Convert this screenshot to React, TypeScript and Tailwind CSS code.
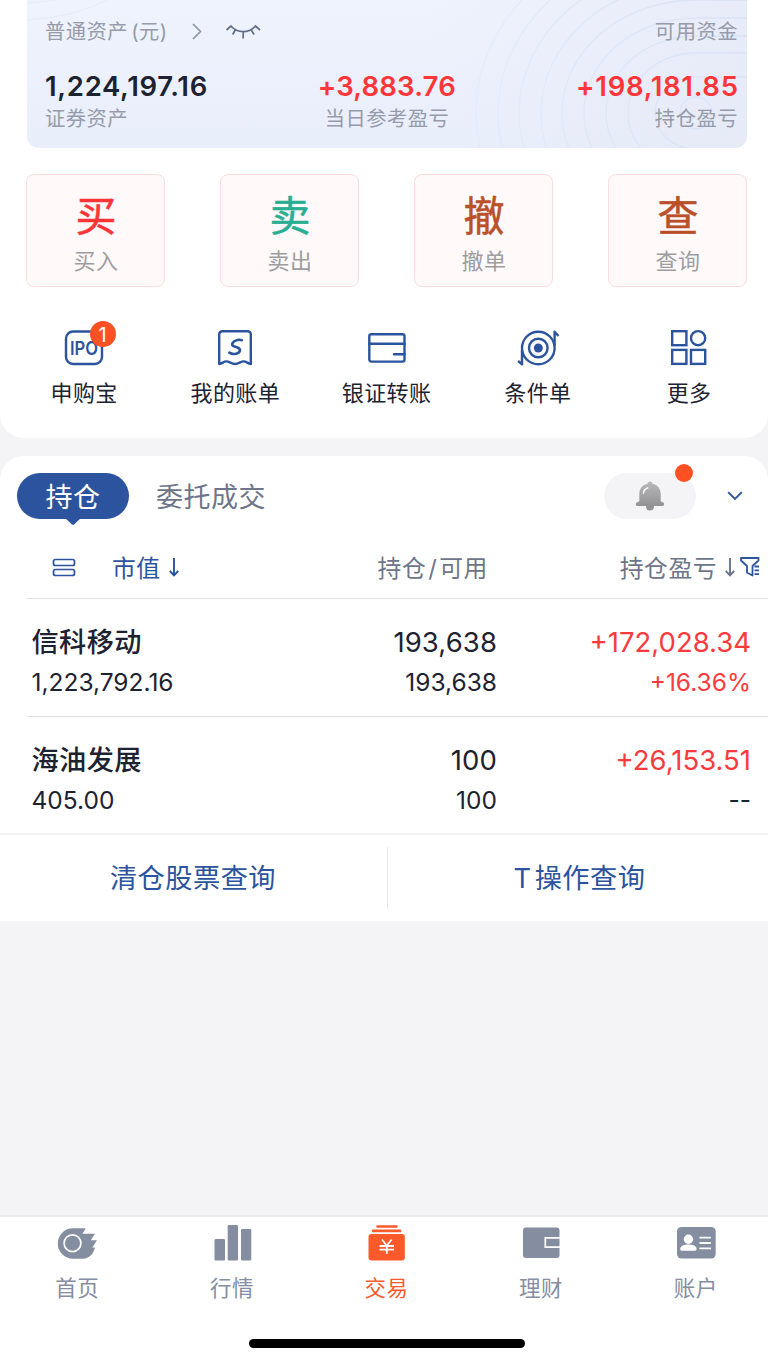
import type { ReactNode } from 'react';

type Holding = {
  name: string;
  marketValue: string;
  position: string;
  available: string;
  profit: string;
  profitRate: string;
};

const actions = [
  { glyph: '买', label: '买入', color: 'text-[#fb3537]' },
  { glyph: '卖', label: '卖出', color: 'text-[#29ae91]' },
  { glyph: '撤', label: '撤单', color: 'text-[#b9502a]' },
  { glyph: '查', label: '查询', color: 'text-[#b9502a]' },
];

const holdings: Holding[] = [
  {
    name: '信科移动',
    marketValue: '1,223,792.16',
    position: '193,638',
    available: '193,638',
    profit: '+172,028.34',
    profitRate: '+16.36%',
  },
  {
    name: '海油发展',
    marketValue: '405.00',
    position: '100',
    available: '100',
    profit: '+26,153.51',
    profitRate: '--',
  },
];

const IpoIcon = () => (
  <svg width="44" height="44" viewBox="0 0 44 44" fill="none">
    <rect x="4" y="5.5" width="36" height="32.5" rx="7" stroke="#2c539d" strokeWidth="2.4" />
    <text
      x="22"
      y="28.6"
      textAnchor="middle"
      textLength="28"
      lengthAdjust="spacingAndGlyphs"
      fill="#2c539d"
      className="font-[Inter,sans-serif] text-[19px] font-semibold"
    >
      IPO
    </text>
  </svg>
);

const BillIcon = () => (
  <svg width="44" height="44" viewBox="0 0 44 44" fill="none" stroke="#2c539d">
    <path
      d="M6.2 38V8.2a3 3 0 0 1 3-3h25.6a3 3 0 0 1 3 3V38c-3-.2-4.3-2.6-7-2.6-3.4 0-5 2.6-8.8 2.6s-5.4-2.6-8.8-2.6c-2.7 0-4 2.4-7 2.6Z"
      strokeWidth="2.4"
      strokeLinejoin="round"
    />
    <path
      d="M28.800 14.200C25 13 19.200 15 19.200 18.500c0 3 7.800 2.200 7.800 5.500 0 4-7 5-10.600 2.600"
      strokeWidth="2.6"
      strokeLinecap="round"
    />
  </svg>
);

const TransferIcon = () => (
  <svg width="44" height="44" viewBox="0 0 44 44" fill="none" stroke="#2c539d" strokeWidth="2.4">
    <rect x="4.3" y="8.2" width="35.2" height="27.4" rx="2" />
    <path d="M4.3 17.8h35.2M29 28.3h10.5" strokeLinecap="round" />
  </svg>
);

const ConditionIcon = () => (
  <svg width="44" height="44" viewBox="0 0 44 44" fill="none" stroke="#2c539d" strokeWidth="2.4">
    <circle cx="22.3" cy="22" r="16.3" />
    <circle cx="22.3" cy="22" r="9.3" />
    <circle cx="22.3" cy="22" r="4.5" fill="#2c539d" stroke="none" />
    <path d="M38.6 20V5.8l3.900 4.200M6 24v14.200L2.100 35" strokeLinejoin="round" />
  </svg>
);

const MoreIcon = () => (
  <svg width="44" height="44" viewBox="0 0 44 44" fill="none" stroke="#2c539d" strokeWidth="2.4">
    <rect x="5.2" y="5.2" width="14.2" height="14" />
    <circle cx="31.1" cy="12.2" r="7.1" />
    <rect x="5.2" y="23.9" width="14.2" height="14" />
    <rect x="24" y="23.9" width="14.2" height="14" />
  </svg>
);

const shortcuts: { label: string; icon: ReactNode; badge?: string }[] = [
  { label: '申购宝', icon: <IpoIcon />, badge: '1' },
  { label: '我的账单', icon: <BillIcon /> },
  { label: '银证转账', icon: <TransferIcon /> },
  { label: '条件单', icon: <ConditionIcon /> },
  { label: '更多', icon: <MoreIcon /> },
];

const HomeIcon = () => (
  <svg width="40" height="36" viewBox="0 0 40 36">
    <path
      d="M16 3.300h12.700L25.500 8.800H38l-4.200 6.400H40l-4.700 7.300H38C36.500 29 32 33.700 26 33.700H16A15.200 15.200 0 0 1 16 3.300Z"
      fill="#858da1"
    />
    <circle cx="15.5" cy="18.200" r="8.4" fill="none" stroke="#fff" strokeWidth="1.7" />
  </svg>
);

const MarketIcon = () => (
  <svg width="40" height="36" viewBox="0 0 40 36" fill="#858da1">
    <rect x="2.5" y="14" width="10.5" height="21.5" rx="1.3" />
    <rect x="15.7" y="0" width="10.3" height="35.5" rx="1.3" />
    <rect x="29" y="4" width="10.3" height="31.5" rx="1.3" />
  </svg>
);

const TradeIcon = () => (
  <svg width="40" height="36" viewBox="0 0 40 36">
    <path d="M11.500 1.500h19M7 5.900h27" stroke="#fc5a2b" strokeWidth="2.6" strokeLinecap="round" />
    <rect x="2.5" y="9" width="36.3" height="26.5" rx="3" fill="#fc5a2b" />
    <path
      d="M16 14.500l4.800 6.200 4.800-6.200M20.800 20.500v8.300M13.500 21h14.500M13.500 24.700h14.500"
      fill="none"
      stroke="#fff"
      strokeWidth="1.8"
    />
  </svg>
);

const WealthIcon = () => (
  <svg width="40" height="36" viewBox="0 0 40 36">
    <rect x="2" y="2.500" width="36.5" height="30.5" rx="3" fill="#858da1" />
    <path d="M39 12.800H24.300v9.400H39" fill="none" stroke="#fff" strokeWidth="1.7" />
  </svg>
);

const AccountIcon = () => (
  <svg width="40" height="36" viewBox="0 0 40 36">
    <rect x="1" y="2" width="38.7" height="31.5" rx="4.5" fill="#858da1" />
    <g fill="#fff">
      <circle cx="12.4" cy="14.2" r="4.7" />
      <path d="M4.200 24.300c0-3.600 4-4.800 8.200-4.800s8.200 1.200 8.200 4.800c0 .9-.6 1.400-1.500 1.400H5.700c-.9 0-1.500-.5-1.500-1.400Z" />
    </g>
    <path d="M24.200 12.600h10M24.200 18h10M24.200 23.400h10" stroke="#fff" strokeWidth="1.8" strokeLinecap="round" />
  </svg>
);

const tabs = [
  { label: '首页', icon: <HomeIcon /> },
  { label: '行情', icon: <MarketIcon /> },
  { label: '交易', icon: <TradeIcon />, active: true },
  { label: '理财', icon: <WealthIcon /> },
  { label: '账户', icon: <AccountIcon /> },
];

const ripples = [
  { rx: 41, ry: 36 },
  { rx: 68, ry: 60 },
  { rx: 90, ry: 77 },
  { rx: 112, ry: 95 },
  { rx: 134, ry: 113 },
  { rx: 155, ry: 131 },
  { rx: 177, ry: 149 },
  { rx: 198, ry: 167 },
  { rx: 220, ry: 185 },
];

const CardRipples = () => (
  <svg className="absolute inset-0" width="720" height="148" viewBox="0 0 720 148" fill="none">
    <defs>
      <linearGradient id="ripple" x1="440" y1="0" x2="720" y2="0" gradientUnits="userSpaceOnUse">
        <stop stopColor="#dbe5f8" stopOpacity=".4" />
        <stop offset="1" stopColor="#d8e2f6" />
      </linearGradient>
    </defs>
    {ripples.map(({ rx, ry }) => (
      <path
        key={rx}
        d={`M720 ${113 - ry}H669A${rx} ${ry} 0 0 0 669 ${113 + ry}H720`}
        stroke="url(#ripple)"
        strokeWidth="1.4"
      />
    ))}
    <circle cx="669" cy="113" r="16" stroke="#dce5f6" strokeWidth="1.4" />
    <path d="M0 3Q16 2 30 0M0 20Q48 17 80 0" stroke="#e6ebf5" />
  </svg>
);

const AssetCard = () => (
  <section className="relative mr-[21px] ml-[27px] h-[148px] overflow-hidden rounded-b-xl bg-linear-to-b from-[#eff3fd] to-[#e9eefb]">
    <div className="absolute inset-0 bg-linear-to-r from-[#e6eaf7]/0 from-55% to-[#e6eaf7]/80" />
    <CardRipples />
    <div className="relative pt-[17px] pr-[9px] pl-[18px]">
      <div className="flex h-[30px] items-center justify-between text-[20.3px] tracking-[0.5px] text-[#959baa]">
        <div className="flex items-center">
          <span className="w-[146px]">
            普通资产<span className="ml-[3px]">(元)</span>
          </span>
          <svg width="12" height="18" viewBox="0 0 12 18" fill="none">
            <path d="M2 1l7.500 7.500L2 16" stroke="#8d94a5" strokeWidth="1.7" />
          </svg>
          <svg className="ml-[22px]" width="36" height="18" viewBox="0 0 36 18" fill="none">
            <path
              d="M1.500 7L6 3c6.500 7.500 18 7.500 24.500 0L35 7M10.500 6.500l-2.800 5M18.200 8.500v7M26 6.500l3 5"
              stroke="#626d86"
              strokeWidth="1.7"
            />
          </svg>
        </div>
        <span>可用资金</span>
      </div>
      <div className="mt-[22px] flex h-9 items-center text-[27.5px] font-semibold text-[#ff3538]">
        <span className="flex-1 tracking-[0.7px] text-[#1d2231]">1,224,197.16</span>
        <span className="flex-1 pr-[10px] text-center tracking-[0.2px]">+3,883.76</span>
        <span className="-mr-[0.7px] flex-1 text-right tracking-[0.7px]">+198,181.85</span>
      </div>
      <div className="-mt-px flex h-[30px] items-center text-[20.3px] tracking-[0.5px] text-[#959baa]">
        <span className="flex-1">证券资产</span>
        <span className="flex-1 pr-[9px] text-center">当日参考盈亏</span>
        <span className="flex-1 text-right">持仓盈亏</span>
      </div>
    </div>
  </section>
);

const TradePanel = () => (
  <div className="h-[438px] rounded-b-3xl bg-white">
    <AssetCard />
    <div className="mt-[26px] mr-[20.6px] ml-[26.4px] flex justify-between">
      {actions.map(({ glyph, label, color }) => (
        <div
          key={label}
          className="flex h-[113px] w-[139px] flex-col items-center rounded-lg border border-[#fbdcdf] bg-[#fff9f9] pt-[13px]"
        >
          <span className={`text-[41px] leading-[57px] [-webkit-text-stroke:0.5px_currentColor] ${color}`}>{glyph}</span>
          <span className="text-[22px] leading-8 tracking-[0.4px] text-[#9d9d9f]">{label}</span>
        </div>
      ))}
    </div>
    <div className="mt-[39px] ml-[8.5px] flex">
      {shortcuts.map(({ label, icon, badge }) => (
        <div key={label} className="flex w-[151.25px] shrink-0 flex-col items-center">
          <div className="relative">
            {icon}
            {badge && (
              <span className="absolute -top-[5px] left-[27.5px] flex size-[26px] items-center justify-center rounded-full bg-[#fd5124] pt-px text-[20px] leading-none text-white">
                {badge}
              </span>
            )}
          </div>
          <span className="mt-[7px] text-[22px] leading-8 tracking-[0.4px] text-[#1d2231]">{label}</span>
        </div>
      ))}
    </div>
  </div>
);

const BellIcon = () => (
  <svg width="30" height="32" viewBox="0 0 30 32">
    <defs>
      <linearGradient id="bell" x1="0" y1="0" x2="0" y2="1">
        <stop stopColor="#b9b9bb" />
        <stop offset="1" stopColor="#929294" />
      </linearGradient>
    </defs>
    <circle cx="15" cy="26.5" r="4" fill="#929294" />
    <path
      d="M15 1.500c1.400 0 2.300.9 2.400 2.200 5.100 1 8.300 5 8.300 10.300v7.300l2.500 1.200c1.600.8 1.200 3.500-.7 3.500h-25c-1.900 0-2.300-2.700-.7-3.500l2.500-1.200V14c0-5.300 3.200-9.300 8.300-10.300.1-1.300 1-2.200 2.400-2.200Z"
      fill="url(#bell)"
    />
    <path d="M8.500 13c.3-2.500 1.800-4.300 4.300-5" fill="none" stroke="#fff" strokeWidth="1.5" strokeLinecap="round" />
  </svg>
);

const ArrowDown = ({ className }: { className?: string }) => (
  <svg className={className} width="12" height="20" viewBox="0 0 12 20" fill="none" stroke="currentColor">
    <path d="M6 1v17M1.800 14L6 18.300 10.200 14" strokeWidth="1.9" />
  </svg>
);

const FilterIcon = () => (
  <svg width="20" height="20" viewBox="0 0 20 20" fill="none" stroke="#2c539d" strokeWidth="1.8">
    <path d="M1 1h17.500v2.500L12.500 9v9.500L7 15.500V9L1 3.500Z" strokeLinejoin="round" />
    <path d="M14.500 9.500H19M14.500 13.300H19M14.500 17.200H19" />
  </svg>
);

const HoldingRow = ({ holding }: { holding: Holding }) => (
  <div className="grid h-[118px] grid-cols-[230px_1fr_254px] border-t border-[#e2e2e4] pt-[23px] pr-[17px] pl-[4.5px] text-[#1d2231]">
    <div>
      <p className="h-10 pt-px text-[27.2px] leading-10 font-medium tracking-[0.4px]">{holding.name}</p>
      <p className="text-[24.5px] leading-10">{holding.marketValue}</p>
    </div>
    <div className="text-right">
      <p className="text-[27.5px] leading-10 tracking-[0.1px]">{holding.position}</p>
      <p className="text-[24.5px] leading-10">{holding.available}</p>
    </div>
    <div className="text-right text-[#fb3a3d]">
      <p className="text-[27.5px] leading-10">{holding.profit}</p>
      <p className={`text-[24.5px] leading-10 ${holding.profitRate === '--' ? 'text-[#1d2231]' : ''}`}>
        {holding.profitRate}
      </p>
    </div>
  </div>
);

const HoldingsPanel = () => (
  <div className="mt-[18px] h-[465px] rounded-t-3xl bg-white pt-[17px]">
    <div className="flex h-[46px] items-center pl-[17px]">
      <div className="relative flex h-[46px] w-[112px] items-center justify-center rounded-full bg-[#2c539d] pt-[4px] text-[27px] tracking-[0.5px] text-white">
        持仓
        <svg className="absolute top-[45px] left-[48px]" width="16" height="8" viewBox="0 0 16 8">
          <path d="M0 0h16L9 6.500q-1 .8-2 0Z" fill="#2c539d" />
        </svg>
      </div>
      <span className="ml-[27px] pt-[4px] text-[27px] tracking-[0.5px] text-[#6d758a]">委托成交</span>
      <div className="relative mr-[31px] ml-auto flex h-[46px] w-[92px] items-center justify-center rounded-full bg-[#f4f4f6]">
        <BellIcon />
        <span className="absolute -top-[9px] right-[3px] size-[18px] rounded-full bg-[#fd5124]" />
      </div>
      <svg className="mr-[25px]" width="16" height="10" viewBox="0 0 16 10" fill="none">
        <path d="M1.200 1.200L8 8l6.800-6.800" stroke="#2c539d" strokeWidth="1.9" />
      </svg>
    </div>
    <div className="flex h-[79px] items-center pt-[17px] pr-[8px] pl-[52px] text-[23.8px] tracking-[0.5px] text-[#6d758a]">
      <svg width="24" height="20" viewBox="0 0 24 20" fill="none" stroke="#2c539d" strokeWidth="1.7">
        <rect x="1.5" y="2.500" width="21" height="6" rx="2" />
        <rect x="1.5" y="12.500" width="21" height="6" rx="2" />
      </svg>
      <span className="ml-9 pt-[3px] text-[#2c539d]">市值</span>
      <ArrowDown className="ml-[7px] text-[#2c539d]" />
      <span className="ml-[198px] pt-[3px]">
        持仓<span className="mx-[2px]">/</span>可用
      </span>
      <span className="ml-auto pt-[3px]">持仓盈亏</span>
      <ArrowDown className="ml-[7px]" />
      <span className="ml-[4px]">
        <FilterIcon />
      </span>
    </div>
    <div className="pl-[27px]">
      {holdings.map((holding) => (
        <HoldingRow key={holding.name} holding={holding} />
      ))}
    </div>
    <div className="-mt-px flex h-[87px] items-center border-t-2 border-[#f2f2f4] text-[27.2px] tracking-[0.5px] text-[#2c539d]">
      <span className="flex h-[62px] w-[388px] items-center justify-center border-r border-[#e9e9eb] pt-[3px] pr-px">
        清仓股票查询
      </span>
      <span className="flex flex-1 items-center justify-center pt-[3px] pl-[3px]">
        T<span className="ml-[3px]">操作查询</span>
      </span>
    </div>
  </div>
);

const TabBar = () => (
  <nav className="mt-auto h-[147px] border-t-2 border-[#ebebed] bg-white">
    <div className="flex pt-2">
      {tabs.map(({ label, icon, active }) => (
        <div
          key={label}
          className={`flex w-[154.6px] shrink-0 flex-col items-center ${active ? 'text-[#fc5a2b]' : 'text-[#858da1]'}`}
        >
          {icon}
          <span className="mt-[11px] text-[21.5px] leading-8 tracking-[0.5px]">{label}</span>
        </div>
      ))}
    </div>
    <div className="mt-[35px] ml-[249px] h-[9px] w-[276px] rounded-full bg-black" />
  </nav>
);

const App = () => (
  <main className="flex h-[1362px] w-[768px] flex-col overflow-hidden bg-[#f4f4f6] font-[Inter,'Noto_Sans_CJK_SC',sans-serif] font-normal">
    <TradePanel />
    <HoldingsPanel />
    <TabBar />
  </main>
);

export default App;
